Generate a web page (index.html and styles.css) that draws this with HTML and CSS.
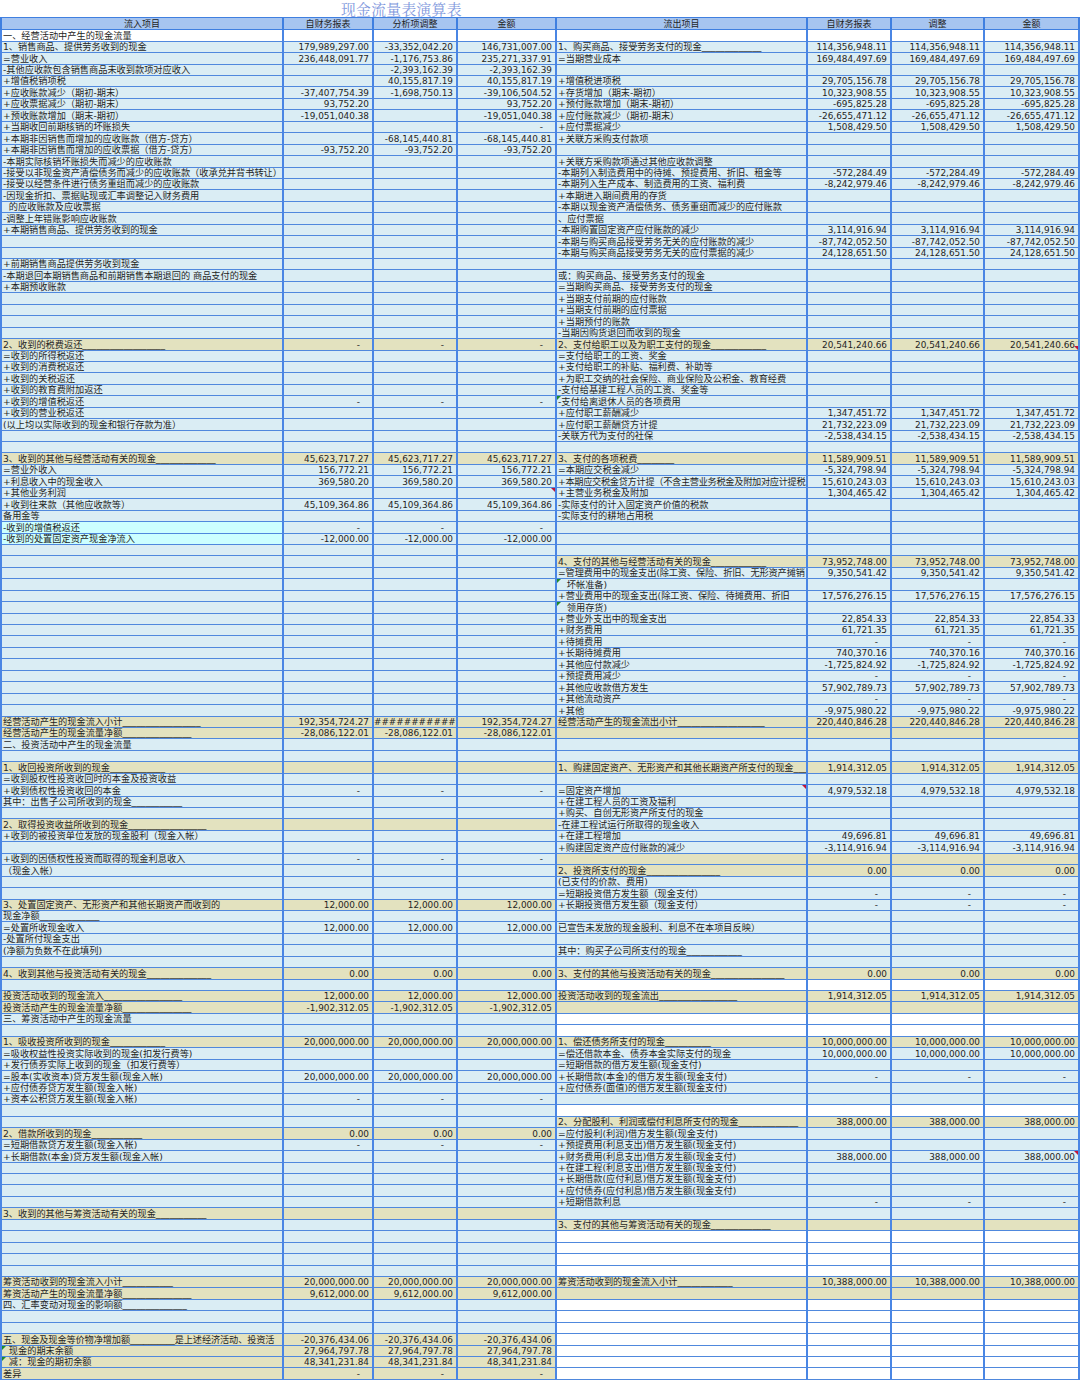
FILE: index.html
```html
<!DOCTYPE html>
<html lang="zh-CN">
<head>
<meta charset="utf-8">
<title>现金流量表演算表</title>
<link rel="stylesheet" href="styles.css">
</head>
<body>
<div class="title">现金流量表演算表</div>
<table class="sheet">
<colgroup><col class="c-lab"><col class="c-a"><col class="c-b"><col class="c-c"><col class="c-rlab"><col class="c-d"><col class="c-e"><col class="c-f"></colgroup>
<thead>
<tr><th>流入项目</th><th>自财务报表</th><th>分析项调整</th><th>金额</th><th>流出项目</th><th>自财务报表</th><th>调整</th><th>金额</th></tr>
</thead>
<tbody>
<tr class="lw rw"><td>一、经营活动中产生的现金流量</td><td></td><td></td><td></td><td></td><td></td><td></td><td></td></tr>
<tr><td>1、销售商品、提供劳务收到的现金</td><td class="n">179,989,297.00</td><td class="n">-33,352,042.20</td><td class="n">146,731,007.00</td><td>1、购买商品、接受劳务支付的现金_____________</td><td class="n">114,356,948.11</td><td class="n">114,356,948.11</td><td class="n">114,356,948.11</td></tr>
<tr><td>=营业收入</td><td class="n">236,448,091.77</td><td class="n">-1,176,753.86</td><td class="n">235,271,337.91</td><td>=当期营业成本</td><td class="n">169,484,497.69</td><td class="n">169,484,497.69</td><td class="n">169,484,497.69</td></tr>
<tr><td>-其他应收款包含销售商品未收到款项对应收入</td><td></td><td class="n">-2,393,162.39</td><td class="n">-2,393,162.39</td><td></td><td></td><td></td><td></td></tr>
<tr><td>+增值税销项税</td><td></td><td class="n">40,155,817.19</td><td class="n">40,155,817.19</td><td>+增值税进项税</td><td class="n">29,705,156.78</td><td class="n">29,705,156.78</td><td class="n">29,705,156.78</td></tr>
<tr><td>+应收账款减少（期初-期末）</td><td class="n">-37,407,754.39</td><td class="n">-1,698,750.13</td><td class="n">-39,106,504.52</td><td>+存货增加（期末-期初）</td><td class="n">10,323,908.55</td><td class="n">10,323,908.55</td><td class="n">10,323,908.55</td></tr>
<tr><td>+应收票据减少（期初-期末）</td><td class="n">93,752.20</td><td></td><td class="n">93,752.20</td><td>+预付账款增加（期末-期初）</td><td class="n">-695,825.28</td><td class="n">-695,825.28</td><td class="n">-695,825.28</td></tr>
<tr><td>+预收账款增加（期末-期初）</td><td class="n">-19,051,040.38</td><td></td><td class="n">-19,051,040.38</td><td>+应付账款减少（期初-期末）</td><td class="n">-26,655,471.12</td><td class="n">-26,655,471.12</td><td class="n">-26,655,471.12</td></tr>
<tr><td>+当期收回前期核销的坏账损失</td><td></td><td></td><td class="d">-</td><td>+应付票据减少</td><td class="n">1,508,429.50</td><td class="n">1,508,429.50</td><td class="n">1,508,429.50</td></tr>
<tr><td>+本期非因销售而增加的应收账款（借方-贷方）</td><td></td><td class="n">-68,145,440.81</td><td class="n">-68,145,440.81</td><td>+关联方采购支付款项</td><td></td><td></td><td></td></tr>
<tr><td>+本期非因销售而增加的应收票据（借方-贷方）</td><td class="n">-93,752.20</td><td class="n">-93,752.20</td><td class="n">-93,752.20</td><td></td><td></td><td></td><td></td></tr>
<tr><td>-本期实际核销坏账损失而减少的应收账款</td><td></td><td></td><td></td><td>+关联方采购款项通过其他应收款调整</td><td></td><td></td><td></td></tr>
<tr><td>-接受以非现金资产清偿债务而减少的应收账款（收承兑并背书转让）</td><td></td><td></td><td></td><td>-本期列入制造费用中的待摊、预提费用、折旧、租金等</td><td class="n">-572,284.49</td><td class="n">-572,284.49</td><td class="n">-572,284.49</td></tr>
<tr><td>-接受以经营条件进行债务重组而减少的应收账款</td><td></td><td></td><td></td><td>-本期列入生产成本、制造费用的工资、福利费</td><td class="n">-8,242,979.46</td><td class="n">-8,242,979.46</td><td class="n">-8,242,979.46</td></tr>
<tr><td>-因现金折扣、票据贴现或汇率调整记入财务费用</td><td></td><td></td><td></td><td>+本期进入期间费用的存货</td><td></td><td></td><td></td></tr>
<tr><td>&nbsp;&nbsp;的应收账款及应收票据</td><td></td><td></td><td></td><td>-本期以现金资产清偿债务、债务重组而减少的应付账款</td><td></td><td></td><td></td></tr>
<tr><td>-调整上年错账影响应收账款</td><td></td><td></td><td></td><td>、应付票据</td><td></td><td></td><td></td></tr>
<tr><td>+本期销售商品、提供劳务收到的现金</td><td></td><td></td><td></td><td>-本期购置固定资产应付账款的减少</td><td class="n">3,114,916.94</td><td class="n">3,114,916.94</td><td class="n">3,114,916.94</td></tr>
<tr><td></td><td></td><td></td><td></td><td>-本期与购买商品接受劳务无关的应付账款的减少</td><td class="n">-87,742,052.50</td><td class="n">-87,742,052.50</td><td class="n">-87,742,052.50</td></tr>
<tr><td></td><td></td><td></td><td></td><td>-本期与购买商品接受劳务无关的应付票据的减少</td><td class="n">24,128,651.50</td><td class="n">24,128,651.50</td><td class="n">24,128,651.50</td></tr>
<tr><td>+前期销售商品提供劳务收到现金</td><td></td><td></td><td></td><td></td><td></td><td></td><td></td></tr>
<tr><td>-本期退回本期销售商品和前期销售本期退回的 商品支付的现金</td><td></td><td></td><td></td><td>或：购买商品、接受劳务支付的现金</td><td></td><td></td><td></td></tr>
<tr><td>+本期预收账款</td><td></td><td></td><td></td><td>=当期购买商品、接受劳务支付的现金</td><td></td><td></td><td></td></tr>
<tr><td></td><td></td><td></td><td></td><td>+当期支付前期的应付账款</td><td></td><td></td><td></td></tr>
<tr><td></td><td></td><td></td><td></td><td>+当期支付前期的应付票据</td><td></td><td></td><td></td></tr>
<tr><td></td><td></td><td></td><td></td><td>+当期预付的账款</td><td></td><td></td><td></td></tr>
<tr><td></td><td></td><td></td><td></td><td>-当期因购货退回而收到的现金</td><td></td><td></td><td></td></tr>
<tr class="lk rk"><td>2、收到的税费返还__________________</td><td class="d">-</td><td class="d">-</td><td class="d">-</td><td>2、支付给职工以及为职工支付的现金____________</td><td class="n">20,541,240.66</td><td class="n">20,541,240.66</td><td class="n mk-b">20,541,240.66</td></tr>
<tr><td>=收到的所得税返还</td><td></td><td></td><td></td><td>=支付给职工的工资、奖金</td><td></td><td></td><td></td></tr>
<tr><td>+收到的消费税返还</td><td></td><td></td><td></td><td>+支付给职工的补贴、福利费、补助等</td><td></td><td></td><td></td></tr>
<tr><td>+收到的关税返还</td><td></td><td></td><td></td><td>+为职工交纳的社会保险、商业保险及公积金、教育经费</td><td></td><td></td><td></td></tr>
<tr><td>+收到的教育费附加返还</td><td></td><td></td><td></td><td>-支付给基建工程人员的工资、奖金等</td><td></td><td></td><td></td></tr>
<tr><td>+收到的增值税返还</td><td class="d">-</td><td class="d">-</td><td class="d">-</td><td class="gk">-支付给离退休人员的各项费用</td><td></td><td></td><td></td></tr>
<tr><td>+收到的营业税返还</td><td></td><td></td><td></td><td>+应付职工薪酬减少</td><td class="n">1,347,451.72</td><td class="n">1,347,451.72</td><td class="n">1,347,451.72</td></tr>
<tr><td>(以上均以实际收到的现金和银行存款为准）</td><td></td><td></td><td></td><td>+应付职工薪酬贷方计提</td><td class="n">21,732,223.09</td><td class="n">21,732,223.09</td><td class="n">21,732,223.09</td></tr>
<tr><td></td><td></td><td></td><td></td><td>-关联方代为支付的社保</td><td class="n">-2,538,434.15</td><td class="n">-2,538,434.15</td><td class="n">-2,538,434.15</td></tr>
<tr><td></td><td></td><td></td><td></td><td></td><td></td><td></td><td></td></tr>
<tr class="lk rk"><td>3、收到的其他与经营活动有关的现金_____________</td><td class="n">45,623,717.27</td><td class="n">45,623,717.27</td><td class="n">45,623,717.27</td><td>3、支付的各项税费________</td><td class="n">11,589,909.51</td><td class="n">11,589,909.51</td><td class="n">11,589,909.51</td></tr>
<tr><td>=营业外收入</td><td class="n">156,772.21</td><td class="n">156,772.21</td><td class="n">156,772.21</td><td>=本期应交税金减少</td><td class="n">-5,324,798.94</td><td class="n">-5,324,798.94</td><td class="n">-5,324,798.94</td></tr>
<tr><td>+利息收入中的现金收入</td><td class="n">369,580.20</td><td class="n">369,580.20</td><td class="n">369,580.20</td><td class="tx">+本期应交税金贷方计提（不含主营业务税金及附加对应计提税</td><td class="n">15,610,243.03</td><td class="n">15,610,243.03</td><td class="n">15,610,243.03</td></tr>
<tr><td>+其他业务利润</td><td></td><td></td><td class="mk"></td><td>+主营业务税金及附加</td><td class="n">1,304,465.42</td><td class="n">1,304,465.42</td><td class="n">1,304,465.42</td></tr>
<tr><td>+收到往来款（其他应收款等）</td><td class="n">45,109,364.86</td><td class="n">45,109,364.86</td><td class="n">45,109,364.86</td><td>-实际支付的计入固定资产价值的税款</td><td></td><td></td><td></td></tr>
<tr><td>备用金等</td><td></td><td></td><td></td><td>-实际支付的耕地占用税</td><td></td><td></td><td></td></tr>
<tr><td class="cy">-收到的增值税返还</td><td class="d">-</td><td class="d">-</td><td class="d">-</td><td></td><td></td><td></td><td></td></tr>
<tr><td class="cy">-收到的处置固定资产现金净流入</td><td class="n">-12,000.00</td><td class="n">-12,000.00</td><td class="n">-12,000.00</td><td></td><td></td><td></td><td></td></tr>
<tr><td></td><td></td><td></td><td></td><td></td><td></td><td></td><td></td></tr>
<tr class="rk"><td></td><td></td><td></td><td></td><td>4、支付的其他与经营活动有关的现金____________</td><td class="n">73,952,748.00</td><td class="n">73,952,748.00</td><td class="n">73,952,748.00</td></tr>
<tr><td></td><td></td><td></td><td></td><td class="tt">=管理费用中的现金支出(除工资、保险、折旧、无形资产摊销</td><td class="n">9,350,541.42</td><td class="n">9,350,541.42</td><td class="n">9,350,541.42</td></tr>
<tr><td></td><td></td><td></td><td></td><td class="gk">&nbsp;&nbsp;&nbsp;坏帐准备)</td><td></td><td></td><td></td></tr>
<tr><td></td><td></td><td></td><td></td><td>+营业费用中的现金支出(除工资、保险、待摊费用、折旧</td><td class="n">17,576,276.15</td><td class="n">17,576,276.15</td><td class="n">17,576,276.15</td></tr>
<tr><td></td><td></td><td></td><td></td><td class="gk">&nbsp;&nbsp;&nbsp;领用存货)</td><td></td><td></td><td></td></tr>
<tr><td></td><td></td><td></td><td></td><td>+营业外支出中的现金支出</td><td class="n">22,854.33</td><td class="n">22,854.33</td><td class="n">22,854.33</td></tr>
<tr><td></td><td></td><td></td><td></td><td>+财务费用</td><td class="n">61,721.35</td><td class="n">61,721.35</td><td class="n">61,721.35</td></tr>
<tr><td></td><td></td><td></td><td></td><td>+待摊费用</td><td class="d">-</td><td class="d">-</td><td class="d">-</td></tr>
<tr><td></td><td></td><td></td><td></td><td>+长期待摊费用</td><td class="n">740,370.16</td><td class="n">740,370.16</td><td class="n">740,370.16</td></tr>
<tr><td></td><td></td><td></td><td></td><td>+其他应付款减少</td><td class="n">-1,725,824.92</td><td class="n">-1,725,824.92</td><td class="n">-1,725,824.92</td></tr>
<tr><td></td><td></td><td></td><td></td><td>+预提费用减少</td><td class="d">-</td><td class="d">-</td><td class="d">-</td></tr>
<tr><td></td><td></td><td></td><td></td><td>+其他应收款借方发生</td><td class="n">57,902,789.73</td><td class="n">57,902,789.73</td><td class="n">57,902,789.73</td></tr>
<tr><td></td><td></td><td></td><td></td><td>+其他流动资产</td><td class="d">-</td><td class="d">-</td><td class="d">-</td></tr>
<tr><td></td><td></td><td></td><td></td><td>+其他</td><td class="n">-9,975,980.22</td><td class="n">-9,975,980.22</td><td class="n">-9,975,980.22</td></tr>
<tr class="lk rk"><td>经营活动产生的现金流入小计_________________</td><td class="n">192,354,724.27</td><td class="n">###########</td><td class="n">192,354,724.27</td><td>经营活动产生的现金流出小计___________________</td><td class="n">220,440,846.28</td><td class="n">220,440,846.28</td><td class="n">220,440,846.28</td></tr>
<tr class="lk rk"><td>经营活动产生的现金流量净额_______________</td><td class="n">-28,086,122.01</td><td class="n">-28,086,122.01</td><td class="n">-28,086,122.01</td><td></td><td></td><td></td><td></td></tr>
<tr><td>二、投资活动中产生的现金流量</td><td></td><td></td><td></td><td></td><td></td><td></td><td></td></tr>
<tr><td></td><td></td><td></td><td></td><td></td><td></td><td></td><td></td></tr>
<tr class="lk rk"><td>1、收回投资所收到的现金____________</td><td></td><td></td><td></td><td>1、购建固定资产、无形资产和其他长期资产所支付的现金___</td><td class="n">1,914,312.05</td><td class="n">1,914,312.05</td><td class="n">1,914,312.05</td></tr>
<tr><td>=收到股权性投资收回时的本金及投资收益</td><td></td><td></td><td></td><td></td><td></td><td></td><td></td></tr>
<tr><td>+收到债权性投资收回的本金</td><td class="d">-</td><td class="d">-</td><td class="d">-</td><td class="mk">=固定资产增加</td><td class="n">4,979,532.18</td><td class="n">4,979,532.18</td><td class="n">4,979,532.18</td></tr>
<tr><td>其中：出售子公司所收到的现金___________</td><td></td><td></td><td></td><td>+在建工程人员的工资及福利</td><td></td><td></td><td></td></tr>
<tr><td></td><td></td><td></td><td></td><td>+购买、自创无形资产所支付的现金</td><td></td><td></td><td></td></tr>
<tr class="lk"><td>2、取得投资收益所收到的现金_________________</td><td></td><td></td><td></td><td>-在建工程试运行所取得的现金收入</td><td></td><td></td><td></td></tr>
<tr><td>+收到的被投资单位发放的现金股利（现金入帐）</td><td></td><td></td><td></td><td>+在建工程增加</td><td class="n">49,696.81</td><td class="n">49,696.81</td><td class="n">49,696.81</td></tr>
<tr><td></td><td></td><td></td><td></td><td>+购建固定资产应付账款的减少</td><td class="n">-3,114,916.94</td><td class="n">-3,114,916.94</td><td class="n">-3,114,916.94</td></tr>
<tr class="rk"><td>+收到的因债权性投资而取得的现金利息收入</td><td class="d">-</td><td class="d">-</td><td class="d">-</td><td></td><td></td><td></td><td></td></tr>
<tr class="rk"><td>（现金入帐）</td><td></td><td></td><td></td><td>2、投资所支付的现金________________</td><td class="n">0.00</td><td class="n">0.00</td><td class="n">0.00</td></tr>
<tr><td></td><td></td><td></td><td></td><td>(已支付的价款、费用)</td><td></td><td></td><td></td></tr>
<tr><td></td><td></td><td></td><td></td><td>=短期投资借方发生额（现金支付）</td><td class="d">-</td><td class="d">-</td><td class="d">-</td></tr>
<tr class="lk"><td>3、处置固定资产、无形资产和其他长期资产而收到的</td><td class="n">12,000.00</td><td class="n">12,000.00</td><td class="n">12,000.00</td><td>+长期投资借方发生额（现金支付）</td><td class="d">-</td><td class="d">-</td><td class="d">-</td></tr>
<tr><td>现金净额_____________</td><td></td><td></td><td></td><td></td><td></td><td></td><td></td></tr>
<tr><td>=处置所收现金收入</td><td class="n">12,000.00</td><td class="n">12,000.00</td><td class="n">12,000.00</td><td>已宣告未发放的现金股利、利息不在本项目反映）</td><td></td><td></td><td></td></tr>
<tr><td>-处置所付现金支出</td><td></td><td></td><td></td><td></td><td></td><td></td><td></td></tr>
<tr><td>(净额为负数不在此填列)</td><td></td><td></td><td></td><td>其中：购买子公司所支付的现金____________</td><td></td><td></td><td></td></tr>
<tr><td></td><td></td><td></td><td></td><td></td><td></td><td></td><td></td></tr>
<tr class="lk rk"><td>4、收到其他与投资活动有关的现金______________</td><td class="n">0.00</td><td class="n">0.00</td><td class="n">0.00</td><td>3、支付的其他与投资活动有关的现金________________</td><td class="n">0.00</td><td class="n">0.00</td><td class="n">0.00</td></tr>
<tr class="rw"><td></td><td></td><td></td><td></td><td></td><td></td><td></td><td></td></tr>
<tr class="lk rk"><td>投资活动收到的现金流入_________________</td><td class="n">12,000.00</td><td class="n">12,000.00</td><td class="n">12,000.00</td><td>投资活动收到的现金流出_________________</td><td class="n">1,914,312.05</td><td class="n">1,914,312.05</td><td class="n">1,914,312.05</td></tr>
<tr class="lk rk"><td>投资活动产生的现金流量净额_______________</td><td class="n">-1,902,312.05</td><td class="n">-1,902,312.05</td><td class="n">-1,902,312.05</td><td></td><td></td><td></td><td></td></tr>
<tr class="rw"><td>三、筹资活动中产生的现金流量</td><td></td><td></td><td></td><td></td><td></td><td></td><td></td></tr>
<tr class="rw"><td></td><td></td><td></td><td></td><td></td><td></td><td></td><td></td></tr>
<tr class="lk rk"><td>1、吸收投资所收到的现金____________</td><td class="n">20,000,000.00</td><td class="n">20,000,000.00</td><td class="n">20,000,000.00</td><td>1、偿还债务所支付的现金__________</td><td class="n">10,000,000.00</td><td class="n">10,000,000.00</td><td class="n">10,000,000.00</td></tr>
<tr><td>=吸收权益性投资实际收到的现金(扣发行费等)</td><td></td><td></td><td></td><td>=偿还借款本金、债券本金实际支付的现金</td><td class="n">10,000,000.00</td><td class="n">10,000,000.00</td><td class="n">10,000,000.00</td></tr>
<tr><td>+发行债券实际上收到的现金（扣发行费等）</td><td></td><td></td><td></td><td>=短期借款的借方发生额(现金支付)</td><td></td><td></td><td></td></tr>
<tr><td>=股本(实收资本)贷方发生额(现金入帐)</td><td class="n">20,000,000.00</td><td class="n">20,000,000.00</td><td class="n">20,000,000.00</td><td>+长期借款(本金)的借方发生额(现金支付)</td><td class="d">-</td><td class="d">-</td><td class="d">-</td></tr>
<tr><td>+应付债券贷方发生额(现金入帐)</td><td></td><td></td><td></td><td>+应付债券(面值)的借方发生额(现金支付)</td><td></td><td></td><td></td></tr>
<tr><td>+资本公积贷方发生额(现金入帐)</td><td class="d">-</td><td class="d">-</td><td class="d">-</td><td></td><td></td><td></td><td></td></tr>
<tr class="rw"><td></td><td></td><td></td><td></td><td></td><td></td><td></td><td></td></tr>
<tr class="rk"><td></td><td></td><td></td><td></td><td>2、分配股利、利润或偿付利息所支付的现金_____________</td><td class="n">388,000.00</td><td class="n">388,000.00</td><td class="n">388,000.00</td></tr>
<tr class="lk"><td>2、借款所收到的现金___________</td><td class="n">0.00</td><td class="n">0.00</td><td class="n">0.00</td><td>=应付股利(利润)借方发生额(现金支付)</td><td></td><td></td><td></td></tr>
<tr><td>=短期借款贷方发生额(现金入帐)</td><td class="d">-</td><td class="d">-</td><td class="d">-</td><td>+预提费用(利息支出)借方发生额(现金支付)</td><td></td><td></td><td></td></tr>
<tr><td>+长期借款(本金)贷方发生额(现金入帐)</td><td></td><td></td><td></td><td>+财务费用(利息支出)借方发生额(现金支付)</td><td class="n">388,000.00</td><td class="n">388,000.00</td><td class="n mk">388,000.00</td></tr>
<tr><td></td><td></td><td></td><td></td><td>+在建工程(利息支出)借方发生额(现金支付)</td><td></td><td></td><td></td></tr>
<tr><td></td><td></td><td></td><td></td><td>+长期借款(应付利息)借方发生额(现金支付)</td><td></td><td></td><td></td></tr>
<tr><td></td><td></td><td></td><td></td><td>+应付债券(应付利息)借方发生额(现金支付)</td><td></td><td></td><td></td></tr>
<tr><td></td><td></td><td></td><td></td><td>+短期借款利息</td><td class="d">-</td><td class="d">-</td><td class="d">-</td></tr>
<tr class="lk"><td>3、收到的其他与筹资活动有关的现金___________</td><td></td><td></td><td></td><td></td><td></td><td></td><td></td></tr>
<tr class="rk"><td></td><td></td><td></td><td></td><td>3、支付的其他与筹资活动有关的现金_____________</td><td></td><td></td><td></td></tr>
<tr class="rw"><td></td><td></td><td></td><td></td><td></td><td></td><td></td><td></td></tr>
<tr class="rw"><td></td><td></td><td></td><td></td><td></td><td></td><td></td><td></td></tr>
<tr class="rw"><td></td><td></td><td></td><td></td><td></td><td></td><td></td><td></td></tr>
<tr class="rw"><td></td><td></td><td></td><td></td><td></td><td></td><td></td><td></td></tr>
<tr class="lk rk"><td>筹资活动收到的现金流入小计___________</td><td class="n">20,000,000.00</td><td class="n">20,000,000.00</td><td class="n">20,000,000.00</td><td>筹资活动收到的现金流入小计____________</td><td class="n">10,388,000.00</td><td class="n">10,388,000.00</td><td class="n">10,388,000.00</td></tr>
<tr class="lk rk"><td>筹资活动产生的现金流量净额_______________</td><td class="n">9,612,000.00</td><td class="n">9,612,000.00</td><td class="n">9,612,000.00</td><td></td><td></td><td></td><td></td></tr>
<tr class="rw"><td>四、汇率变动对现金的影响额______________</td><td></td><td></td><td></td><td></td><td></td><td></td><td></td></tr>
<tr class="rw"><td></td><td></td><td></td><td></td><td></td><td></td><td></td><td></td></tr>
<tr class="rw"><td></td><td></td><td></td><td></td><td></td><td></td><td></td><td></td></tr>
<tr class="lk rw"><td class="tt">五、现金及现金等价物净增加额__________是上述经济活动、投资活</td><td class="n">-20,376,434.06</td><td class="n">-20,376,434.06</td><td class="n">-20,376,434.06</td><td></td><td></td><td></td><td></td></tr>
<tr class="lk rw"><td class="gk">&nbsp;&nbsp;现金的期末余额</td><td class="n">27,964,797.78</td><td class="n">27,964,797.78</td><td class="n">27,964,797.78</td><td></td><td></td><td></td><td></td></tr>
<tr class="lk rw"><td class="gk">&nbsp;&nbsp;减：现金的期初余额</td><td class="n">48,341,231.84</td><td class="n">48,341,231.84</td><td class="n">48,341,231.84</td><td></td><td></td><td></td><td></td></tr>
<tr class="lk rw"><td>差异</td><td class="d">-</td><td class="d">-</td><td class="d">-</td><td></td><td></td><td></td><td></td></tr>
</tbody>
</table>
</body>
</html>
```

FILE: styles.css
```css
* { box-sizing: border-box; }

body {
  margin: 0;
  background: #ffffff;
  color: #1f1f1f;
  font-family: "DejaVu Sans", "Noto Sans CJK SC", sans-serif;
}

.title {
  height: 17.3px;
  padding-left: 341px;
  font-family: "Noto Serif CJK SC", "Noto Sans CJK SC", serif;
  font-size: 14.8px;
  line-height: 17px;
  color: #7f98dd;
  letter-spacing: 0.3px;
}

.sheet {
  width: 1078px;
  table-layout: fixed;
  border-collapse: collapse;
}

.c-lab { width: 282px; }
.c-a { width: 90px; }
.c-b { width: 84px; }
.c-c { width: 99px; }
.c-rlab { width: 251px; }
.c-d { width: 84px; }
.c-e { width: 93px; }
.c-f { width: 95px; }

.sheet th {
  height: 12px;
  padding: 0;
  background: #a7c5f0;
  border: 1px solid #3f7fe0;
  border-left-width: 2px;
  border-right-width: 2px;
  font-weight: normal;
  font-size: 9px;
  line-height: 10px;
  text-align: center;
  vertical-align: bottom;
  font-family: "DejaVu Sans", "Noto Sans CJK SC", sans-serif;
}

.sheet td {
  height: 11.44px;
  padding: 0 0 0 1px;
  background: #daedf4;
  border-top: 1px solid #4f88dd;
  border-bottom: 1px solid #4f88dd;
  border-left: 2px solid #4a86e4;
  border-right: 2px solid #4a86e4;
  font-size: 9.2px;
  line-height: 10px;
  white-space: nowrap;
  overflow: hidden;
  vertical-align: bottom;
  text-align: left;
}

.sheet td.tt { letter-spacing: -0.12px; }
.sheet td.tx { letter-spacing: -0.3px; }

.sheet td.n {
  text-align: right;
  padding: 0 3px 0 0;
  font-size: 8.9px;
}

.sheet td.d {
  text-align: right;
  padding: 0 12px 0 0;
  font-size: 8.9px;
}

/* row shading, left half (inflows) and right half (outflows) */
.lw td:nth-child(-n+4) { background: #ffffff; }
.rw td:nth-child(n+5) { background: #ffffff; }
.lk td:nth-child(-n+4) { background: #e3e2bf; }
.rk td:nth-child(n+5) { background: #e3e2bf; }
.sheet td.cy { background: #ccffff; }

/* spreadsheet comment / warning corner marks */
.sheet td.mk,
.sheet td.mk-b,
.sheet td.gk { position: relative; }

.sheet td.mk::after {
  content: "";
  position: absolute;
  top: 0;
  right: 0;
  border-left: 4px solid transparent;
  border-top: 4px solid #c0143c;
}

.sheet td.mk-b::after {
  content: "";
  position: absolute;
  bottom: 0;
  right: 0;
  border-left: 4px solid transparent;
  border-top: 4px solid #c0143c;
}

.sheet td.gk::before {
  content: "";
  position: absolute;
  top: 0;
  left: 0;
  border-right: 4px solid transparent;
  border-top: 4px solid #1f8a2c;
}
```
